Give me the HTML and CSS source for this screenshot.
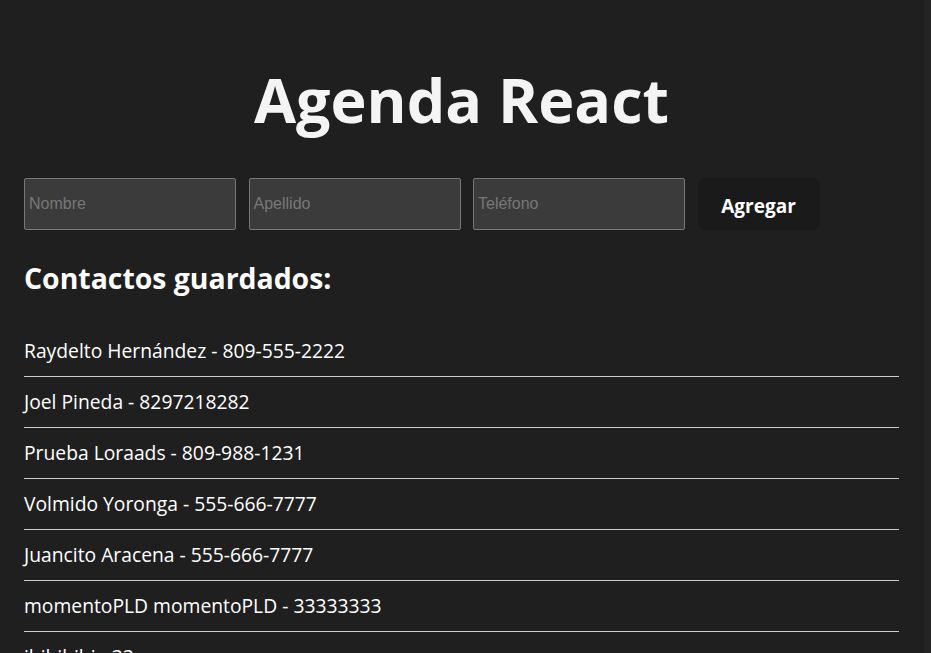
FILE: index.html
```html
<!DOCTYPE html>
<html lang="es">
<head>
<meta charset="utf-8">
<title>Agenda React</title>
<link rel="stylesheet" href="styles.css">
</head>
<body>
<div class="page">
  <main class="main">
    <h1 class="title">Agenda React</h1>
    <form class="form">
      <input class="field" type="text" placeholder="Nombre">
      <input class="field" type="text" placeholder="Apellido">
      <input class="field" type="text" placeholder="Teléfono">
      <button class="btn" type="button">Agregar</button>
    </form>
    <h2 class="subtitle">Contactos guardados:</h2>
    <ul class="list">
      <li class="item">Raydelto Hernández - 809-555-2222</li>
      <li class="item">Joel Pineda - 8297218282</li>
      <li class="item">Prueba Loraads - 809-988-1231</li>
      <li class="item">Volmido Yoronga - 555-666-7777</li>
      <li class="item">Juancito Aracena - 555-666-7777</li>
      <li class="item">momentoPLD momentoPLD - 33333333</li>
      <li class="item">ibibibibi - 33</li>
    </ul>
  </main>
  <div class="scrolltrack"></div>
</div>
</body>
</html>
```

FILE: styles.css
```css
html, body {
  margin: 0;
  height: 100%;
  overflow: hidden;
  background: #1f1f1f;
}
body {
  font-family: "Open Sans", "Noto Sans", sans-serif;
  color: #ffffff;
}
.page {
  display: flex;
  height: 100%;
}
.main {
  flex: 1;
  padding: 60px 25px 0 24px;
  min-width: 0;
}
.scrolltrack {
  width: 7px;
  background: #242424;
}
.title {
  margin: 0;
  font-size: 61px;
  line-height: 80px;
  font-weight: 700;
  text-align: center;
  color: #f4f4f4;
}
.form {
  display: flex;
  gap: 12.5px;
  margin-top: 38px;
}
.field {
  box-sizing: border-box;
  width: 212px;
  height: 52px;
  margin: 0;
  padding: 0 4px;
  border: 1px solid #777777;
  border-radius: 2px;
  background: #3b3b3b;
  color: #ffffff;
  font-family: "Liberation Sans", Arial, sans-serif;
  font-size: 16px;
}
.field::placeholder {
  color: #777777;
}
.btn {
  box-sizing: border-box;
  width: 122px;
  height: 52px;
  padding: 4px 0 0;
  border: none;
  border-radius: 8px;
  background: #1a1a1a;
  color: #ffffff;
  font-family: "Open Sans", "Noto Sans", sans-serif;
  font-size: 19px;
  font-weight: 700;
  cursor: pointer;
}
.subtitle {
  margin: 30px 0 0;
  font-size: 28.4px;
  line-height: 36px;
  font-weight: 700;
}
.list {
  list-style: none;
  margin: 30px 0 0;
  padding: 0;
}
.item {
  padding: 12px 0;
  line-height: 26px;
  font-size: 19.3px;
  border-bottom: 1px solid #cccccc;
}
```
